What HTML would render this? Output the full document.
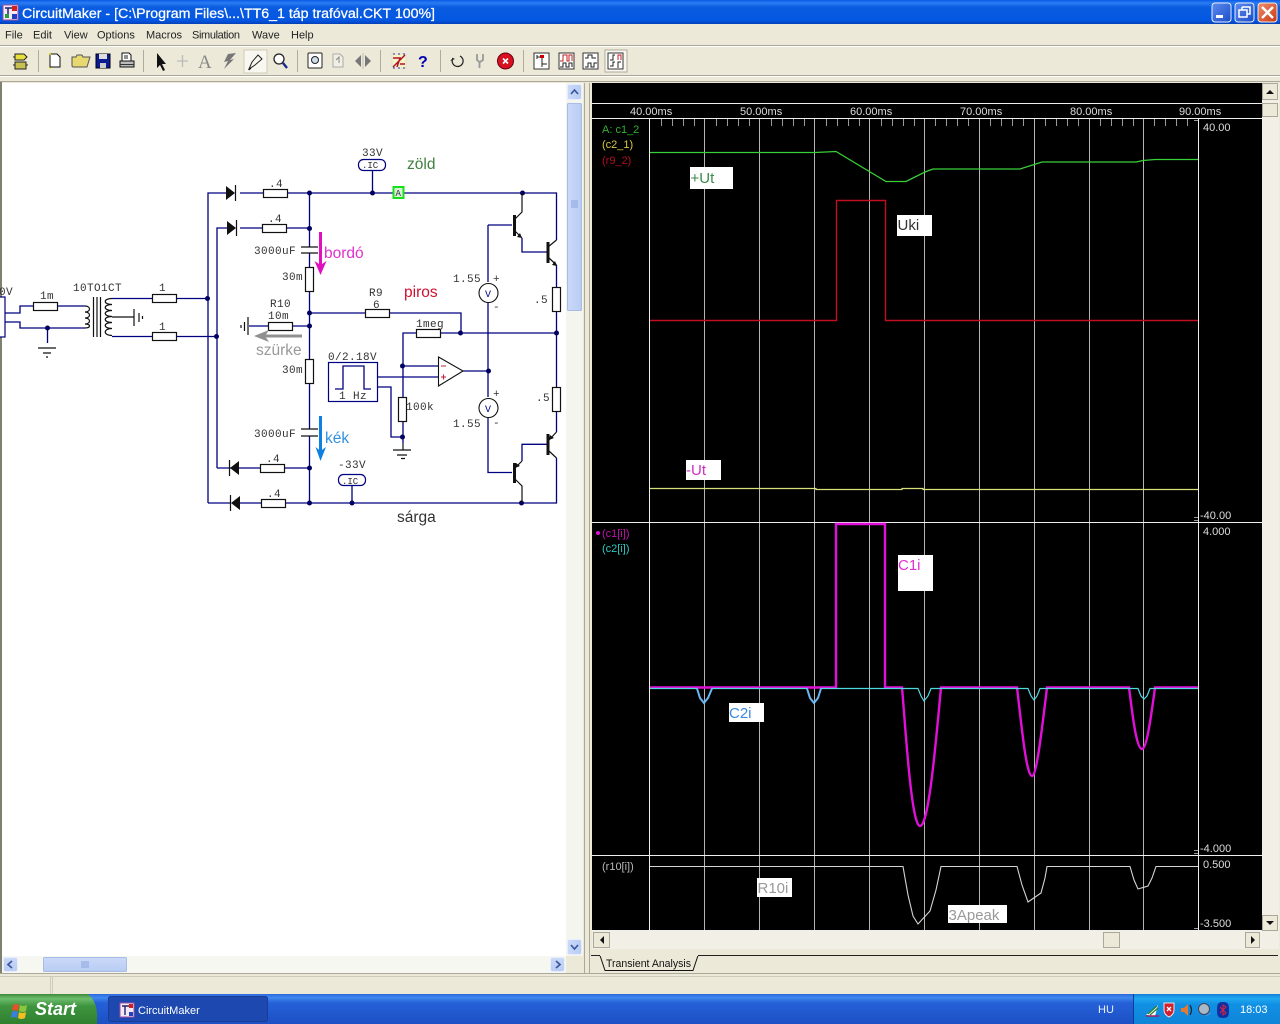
<!DOCTYPE html>
<html><head><meta charset="utf-8"><title>CircuitMaker</title>
<style>
html,body{margin:0;padding:0;background:#ece9d8;overflow:hidden}
svg{display:block;position:absolute;left:0;top:0}
text{font-family:"Liberation Sans",sans-serif;white-space:pre}
.m{font-family:"Liberation Mono",monospace;font-size:11px;fill:#333;letter-spacing:.4px}
.menu{font-size:11px;fill:#222}
.ax{font-size:11px;fill:#ddd}
.w{fill:none;stroke:#000080;stroke-width:1.3}
.k{fill:none;stroke:#111;stroke-width:1.2}
.r{fill:#fff;stroke:#111;stroke-width:1.2}
.d{fill:#000060}
.g{stroke:#b4b4b4;stroke-width:1;fill:none}
.lab{font-size:15px}
</style></head><body>
<svg width="1280" height="1024" viewBox="0 0 1280 1024" xmlns="http://www.w3.org/2000/svg">
<defs>
<linearGradient id="tb" x1="0" y1="0" x2="0" y2="1"><stop offset="0" stop-color="#0a5ae6"/><stop offset=".12" stop-color="#2a7cf4"/><stop offset=".3" stop-color="#0a5ce0"/><stop offset=".85" stop-color="#0457e2"/><stop offset="1" stop-color="#0340b8"/></linearGradient>
<linearGradient id="task" x1="0" y1="0" x2="0" y2="1"><stop offset="0" stop-color="#2a68dc"/><stop offset=".12" stop-color="#3f88ee"/><stop offset=".3" stop-color="#2560d8"/><stop offset="1" stop-color="#1d50c4"/></linearGradient>
<linearGradient id="tray" x1="0" y1="0" x2="0" y2="1"><stop offset="0" stop-color="#1080d8"/><stop offset=".15" stop-color="#20a8f0"/><stop offset=".35" stop-color="#1090e4"/><stop offset="1" stop-color="#0f84d8"/></linearGradient>
<linearGradient id="start" x1="0" y1="0" x2="0" y2="1"><stop offset="0" stop-color="#3a8a3a"/><stop offset=".15" stop-color="#6cbc6c"/><stop offset=".4" stop-color="#3f953f"/><stop offset="1" stop-color="#2f7f2f"/></linearGradient>
<linearGradient id="btn" x1="0" y1="0" x2="1" y2="1"><stop offset="0" stop-color="#5e8cf0"/><stop offset="1" stop-color="#1c4cc8"/></linearGradient>
<linearGradient id="cl" x1="0" y1="0" x2="1" y2="1"><stop offset="0" stop-color="#ec9070"/><stop offset="1" stop-color="#cc3810"/></linearGradient>
<linearGradient id="sb" x1="0" y1="0" x2="1" y2="0"><stop offset="0" stop-color="#ccd9f9"/><stop offset="1" stop-color="#b8ccf3"/></linearGradient>
<linearGradient id="sbh" x1="0" y1="0" x2="0" y2="1"><stop offset="0" stop-color="#ccd9f9"/><stop offset="1" stop-color="#b8ccf3"/></linearGradient>
</defs>

<!-- window chrome -->
<rect width="1280" height="1024" fill="#ece9d8"/>
<rect width="1280" height="24" fill="url(#tb)"/>
<rect x="3" y="5" width="15" height="15" fill="#f4e8f4" stroke="#a050a0"/>
<path d="M5 8h9M8 8v9" stroke="#226" stroke-width="1.5"/><rect x="12" y="6" width="5" height="5" fill="#d02020"/><rect x="12" y="14" width="5" height="5" fill="#2040c0"/><rect x="5" y="14" width="4" height="4" fill="#20a040"/>
<text x="22" y="18" font-size="13.5" fill="#fff" stroke="#fff" stroke-width=".25" textLength="413" lengthAdjust="spacingAndGlyphs">CircuitMaker - [C:\Program Files\...\TT6_1 táp trafóval.CKT 100%]</text>
<g>
<rect x="1212" y="3" width="19" height="19" rx="3" fill="url(#btn)" stroke="#e8eefc"/><rect x="1216" y="15" width="7" height="3" fill="#fff"/>
<rect x="1235" y="3" width="19" height="19" rx="3" fill="url(#btn)" stroke="#e8eefc"/><path d="M1242 7h8v7h-3M1242 7v3" fill="none" stroke="#fff" stroke-width="1.5"/><rect x="1239" y="10" width="8" height="7" fill="none" stroke="#fff" stroke-width="1.5"/>
<rect x="1258" y="3" width="19" height="19" rx="3" fill="url(#cl)" stroke="#f4e8e0"/><path d="M1262 7l11 11M1273 7l-11 11" stroke="#fff" stroke-width="2.4"/>
</g>

<!-- menu -->
<text class="menu" x="5" y="38.5">File</text><text class="menu" x="33" y="38.5">Edit</text><text class="menu" x="64" y="38.5">View</text><text class="menu" x="97" y="38.5">Options</text><text class="menu" x="146" y="38.5">Macros</text><text class="menu" x="192" y="38.5" textLength="48">Simulation</text><text class="menu" x="252" y="38.5">Wave</text><text class="menu" x="291" y="38.5">Help</text>
<path d="M0 45.5h1280" stroke="#aca899"/><path d="M0 46.5h1280" stroke="#fff"/>
<path d="M0 75.5h1280" stroke="#aca899"/><path d="M0 76.5h1280" stroke="#fff"/>

<!-- toolbar -->
<g>
<path d="M38.5 50v22M143.5 50v22M297.5 50v22M380.5 50v22M440.5 50v22M523.5 50v22" stroke="#b0ac9c"/>
<path d="M15 54h9l3 3-3 3h-9z" fill="#e8e040" stroke="#222"/><rect x="15" y="62" width="11" height="7" fill="#c8c050" stroke="#222"/><path d="M13 57h2M13 65h2M26 65h2" stroke="#222"/>
<path d="M50 54h7l3 3v10h-10z" fill="#fff" stroke="#111"/><path d="M49 53l2 2M49 68h2" stroke="#ee0"/>
<path d="M72 66v-9h4l1-2h5l1 2h7l-3 10H73z" fill="#e8d870" stroke="#555"/>
<rect x="96" y="54" width="14" height="14" fill="#0a1a90" stroke="#001"/><rect x="99" y="54" width="8" height="5" fill="#ddd"/><rect x="100" y="63" width="6" height="5" fill="#ccc"/>
<path d="M122 53h7l2 2v6h-9z" fill="#fff" stroke="#111"/><rect x="120" y="61" width="14" height="6" fill="#bbb" stroke="#111"/><path d="M124 56h4M124 58h4" stroke="#222"/><path d="M120 64.500h14" stroke="#333"/>
<path d="M157 53l0 15 3-3 3 6 2-1-3-6 4 0z" fill="#111"/>
<path d="M177 61h11M182.500 55v12" stroke="#bbb" stroke-width="1.3"/>
<text x="198" y="68" font-size="19" fill="#888" style="font-family:'Liberation Serif',serif">A</text>
<path d="M236 53l-8 1-4 8 4-1-4 8 10-10-4 1z" fill="#777"/>
<rect x="244" y="50" width="23" height="23" fill="#f8f7f0" stroke="#d0ccb8"/>
<path d="M249 69l3-7 6-7 4 4-7 6z" fill="none" stroke="#222"/><path d="M249 70l2-2" stroke="#111"/>
<circle cx="279" cy="59" r="5" fill="#fff" stroke="#222" stroke-width="1.3"/><path d="M283 63l4 5" stroke="#1a2a90" stroke-width="2.4"/>
<rect x="308" y="53" width="14" height="15" rx="1" fill="#fff" stroke="#222"/><circle cx="315" cy="60" r="3.500" fill="#cde" stroke="#222"/>
<path d="M333 54h7l3 3v10h-10z" fill="#f2f0e6" stroke="#aaa"/><path d="M336 60l3-3v6" fill="none" stroke="#888"/>
<path d="M361 55l-6 6 6 6zM365 55l6 6-6 6z" fill="#777"/><path d="M363 53v16" stroke="#bbb"/>
<rect x="392" y="54" width="14" height="14" fill="#f6f4c0" stroke="#ddd"/><path d="M393 67l12-12M393 58h7l-3 9M405 64h-5" stroke="#b01030" stroke-width="1.5" fill="none"/><path d="M393 54h12M393 68h12" stroke="#3030a0" stroke-dasharray="2 3"/>
<text x="418" y="67" font-size="16" font-weight="bold" fill="#0000b0">?</text>
<path d="M460 56a5.500 5.500 0 1 1-7 2" fill="none" stroke="#222" stroke-width="1.2"/><path d="M450 61l5-2-2-1z" fill="#222"/>
<path d="M477 54v6l2.500 2v6M483 54v6l-3 2" fill="none" stroke="#999" stroke-width="1.8"/>
<circle cx="505.500" cy="61" r="8" fill="#d81020" stroke="#601"/><path d="M503 58.500l5 5M508 58.500l-5 5" stroke="#fff" stroke-width="1.6"/>
<rect x="534" y="53" width="15" height="16" fill="#fff" stroke="#333"/><path d="M537 57h5v7h5M542 64v3M537 55v4" fill="none" stroke="#222"/><rect x="540" y="55" width="4" height="3" fill="#c00"/>
<rect x="559" y="53" width="15" height="16" fill="#fff" stroke="#333"/><path d="M560 61h3v-6h4v6h2v-6h3v6" fill="none" stroke="#c02020"/><path d="M560 67h3v-4h3v4h3v-4h3v4" fill="none" stroke="#222"/>
<rect x="583" y="53" width="15" height="16" fill="#fff" stroke="#333"/><path d="M585 58h3v-3h4v3h4M585 67h3v-4h3v4h3v-4h3" fill="none" stroke="#222"/>
<rect x="605" y="50" width="22" height="22" fill="#f8f7f0" stroke="#b0ac9c"/><rect x="608" y="53" width="15" height="16" fill="#fff" stroke="#333"/><path d="M610 60h3v-5h2M610 66h3v-4h2M618 60v-5h3v5M618 68v-6h3" fill="none" stroke="#222"/><path d="M618 60v-5h3v5" fill="none" stroke="#c02020"/>
</g>
<path d="M0 81.500h1280" stroke="#aca899"/>

<!-- left panel -->
<rect x="0" y="82" width="2" height="892" fill="#808070"/>
<rect x="2" y="83" width="564" height="873" fill="#fff"/>
<rect x="566" y="83" width="17" height="873" fill="#f5f5ef"/>
<rect x="2" y="956" width="564" height="17" fill="#f7f7f2"/>
<rect x="567.500" y="84.500" width="14" height="15" rx="2" fill="url(#sb)" stroke="#e8eefc"/><path d="M571 94l3.500-4 3.500 4" fill="none" stroke="#3a58a0" stroke-width="1.7"/>
<rect x="567.500" y="103.500" width="14" height="207" rx="1" fill="url(#sb)" stroke="#a8bce6"/><path d="M571 201h7M571 203h7M571 205h7M571 207h7" stroke="#8aa4dc"/>
<rect x="567.500" y="939.500" width="14" height="15" rx="2" fill="url(#sb)" stroke="#e8eefc"/><path d="M571 945l3.500 4 3.500-4" fill="none" stroke="#3a58a0" stroke-width="1.7"/>
<rect x="3.500" y="957.500" width="14" height="14" rx="2" fill="url(#sbh)" stroke="#e8eefc"/><path d="M12 961l-4 3.500 4 3.500" fill="none" stroke="#3a58a0" stroke-width="1.7"/>
<rect x="43.500" y="957.500" width="83" height="14" rx="1" fill="url(#sbh)" stroke="#a8bce6"/><path d="M82 961v7M84 961v7M86 961v7M88 961v7" stroke="#8aa4dc"/>
<rect x="550.500" y="957.500" width="14" height="14" rx="2" fill="url(#sbh)" stroke="#e8eefc"/><path d="M556 961l4 3.500-4 3.500" fill="none" stroke="#3a58a0" stroke-width="1.700"/>
<path d="M584.500 83v890" stroke="#aca899"/><path d="M589.500 83v890" stroke="#aca899"/>

<!-- schematic wires -->
<path class="w" d="M208 503V193H226M240 193H263M287 193H556.500V240M556.500 265V287M217 468V228H227M240 228H262M286 228H310M309.500 193V247M309.500 253V267M309.500 291V359M309.500 383V429M309.500 436V503M240 468H217M239 468H260M285 468H310M231 503H208M240 503H261M286 503H556.500V458"/>
<path class="w" d="M5 313H20V306H33M58 306H85M5 322H20V328H85M47.500 328V343M112 298.500H152M177 298.500H208M112 336.500H152M177 336.500H217M372.500 170V193M352 485V503M293 326H310M249 326H268M310 313H365M390 313H461V333M403 397V333H416M441 333H557M556.500 311V387M556.500 412V432M403 421V443M403 366H438M378 377H438M378 387H391V437H403M463 371H488M488 225V282M488 303V397M488 418V472.500H512M488 225H512M522 238V252H547M522 461V444.300H547"/>
<path class="k" d="M38 348H56M43 353H51M46 357H48M403 443V450M393 450H411M397 455H407M401 458.500H405M112 317H134M241 325V328M244.500 322V331M248 317V335M134 309V326M139 313V322M142.500 316V319"/>
<g class="d"><circle cx="207.500" cy="298.500" r="2.500"/><circle cx="216.500" cy="336.500" r="2.500"/><circle cx="47.500" cy="328" r="2.500"/><circle cx="309.500" cy="193" r="2.500"/><circle cx="372.500" cy="193" r="2.500"/><circle cx="522.500" cy="193" r="2.500"/><circle cx="309.500" cy="228.500" r="2.500"/><circle cx="309.500" cy="313" r="2.500"/><circle cx="309.500" cy="326" r="2.500"/><circle cx="309.500" cy="468" r="2.500"/><circle cx="309.500" cy="503" r="2.500"/><circle cx="352" cy="503" r="2.500"/><circle cx="521.500" cy="503" r="2.500"/><circle cx="460.500" cy="333" r="2.500"/><circle cx="556.500" cy="333" r="2.500"/><circle cx="402.500" cy="366" r="2.500"/><circle cx="402.500" cy="437" r="2.500"/><circle cx="488.500" cy="371" r="2.500"/></g>
<!-- source + transformer -->
<rect x="-4" y="297" width="9" height="40" fill="#fff" stroke="#000080" stroke-width="1.200"/>
<path class="k" d="M85 306c6 0 6 6 0 6c6 0 6 6 0 6c6 0 6 6 0 6c6 0 6 4 0 4M112 298.500c-9 0-9 6 0 6c-9 0-9 6 0 6c-9 0-9 6 0 6c-9 0-9 6 0 6c-9 0-9 6 0 6c-9 0-9 7 0 7M93.500 297V337M97 297V337M100.500 297V337"/>
<!-- resistors -->
<g class="r"><rect x="33.500" y="302.500" width="24" height="8"/><rect x="152.500" y="294.500" width="24" height="8"/><rect x="152.500" y="332.500" width="24" height="8"/><rect x="263.500" y="189.500" width="24" height="8"/><rect x="262.500" y="224.500" width="24" height="8"/><rect x="260.500" y="464.500" width="24" height="8"/><rect x="261.500" y="499.500" width="24" height="8"/><rect x="268.500" y="322.500" width="24" height="8"/><rect x="365.500" y="309.500" width="24" height="8"/><rect x="416.500" y="329.500" width="24" height="8"/><rect x="305.500" y="267.500" width="8" height="24"/><rect x="305.500" y="359.500" width="8" height="24"/><rect x="398.500" y="397.500" width="8" height="24"/><rect x="552.500" y="287.500" width="8" height="24"/><rect x="552.500" y="387.500" width="8" height="24"/></g>
<!-- diodes -->
<path d="M226 186l9 7-9 7z M227 221l9 7-9 7z M239 461l-9 7 9 7z M240 496l-9 7 9 7z" fill="#111"/>
<path d="M235.500 185v16M236.500 220v16M229.500 460v16M230.500 495v16" stroke="#111" stroke-width="1.200"/>
<!-- caps -->
<path d="M301 247H318M301 253H318M301 429H318M301 436H318" stroke="#111" stroke-width="1.300"/>
<!-- ICs -->
<rect x="358.500" y="159.500" width="27" height="11" rx="5" fill="#fff" stroke="#000080" stroke-width="1.200"/>
<rect x="338.500" y="474.500" width="27" height="11" rx="5" fill="#fff" stroke="#000080" stroke-width="1.200"/>
<rect x="393.500" y="187" width="10" height="11" fill="#d8f0d8" stroke="#18e018" stroke-width="2"/>
<text class="m" x="395.500" y="196" style="font-size:9px;letter-spacing:0">A</text>
<!-- op amp -->
<path d="M438.500 357L463 371L438.500 386z" fill="#fff" stroke="#111" stroke-width="1.100"/>
<path d="M441 366h5M441 377h5M443.500 374.500v5" stroke="#c02040" stroke-width="1.100"/>
<!-- pulse -->
<rect x="328.500" y="362.500" width="49" height="39" fill="#fff" stroke="#000080" stroke-width="1.200"/>
<path d="M335 389H343V366H364V389H371" class="w"/>
<!-- meters -->
<circle cx="488.500" cy="293" r="9.500" fill="#fff" stroke="#111" stroke-width="1.100"/><circle cx="488.500" cy="408" r="9.500" fill="#fff" stroke="#111" stroke-width="1.100"/>
<!-- transistors -->
<path d="M514.500 215V236M548 242V263M548 434V455M514.500 463V483" stroke="#111" stroke-width="3"/>
<path class="k" d="M515 219L522 212V193M515 231L522 238M548 247L556.500 240M549 258L556.500 265M549 440L556.500 432M549 451L556.500 458M515 468L522 461M515 479L522 486V503"/>
<path d="M522 238l-5-1 3-4zM557 266l-5-1 3-4zM549 440l1-5 4 3zM515 468l1-5 4 3z" fill="#111"/>
<!-- schematic labels -->
<text class="m" x="-1" y="295">0V</text>
<text class="m" x="40" y="299">1m</text><text class="m" x="73" y="291">10TO1CT</text><text class="m" x="159" y="291">1</text><text class="m" x="159" y="330">1</text>
<text class="m" x="269" y="187">.4</text><text class="m" x="268" y="222">.4</text><text class="m" x="266" y="462">.4</text><text class="m" x="267" y="497">.4</text>
<text class="m" x="254" y="254">3000uF</text><text class="m" x="254" y="437">3000uF</text><text class="m" x="282" y="280">30m</text><text class="m" x="282" y="373">30m</text>
<text class="m" x="270" y="307">R10</text><text class="m" x="268" y="319">10m</text><text class="m" x="369" y="296">R9</text><text class="m" x="373" y="308">6</text><text class="m" x="416" y="327">1meg</text>
<text class="m" x="328" y="360">0/2.18V</text><text class="m" x="339" y="399">1 Hz</text><text class="m" x="406" y="410">100k</text>
<text class="m" x="453" y="282">1.55</text><text class="m" x="453" y="427">1.55</text><text class="m" x="534" y="303">.5</text><text class="m" x="536" y="401">.5</text>
<text class="m" x="362" y="156">33V</text><text class="m" x="338" y="468">-33V</text>
<text class="m" x="362" y="168" style="font-size:9px;letter-spacing:0">.IC</text><text class="m" x="342" y="484" style="font-size:9px;letter-spacing:0">.IC</text>
<text class="m" x="485" y="297" style="font-size:10px;letter-spacing:0;fill:#000080">V</text><text class="m" x="485" y="412" style="font-size:10px;letter-spacing:0;fill:#000080">V</text>
<text class="m" x="493" y="282">+</text><text class="m" x="493" y="310">-</text><text class="m" x="493" y="397">+</text><text class="m" x="493" y="426">-</text>
<!-- colour annotations -->
<text x="407" y="169" font-size="15.5" fill="#3f8040">zöld</text>
<text x="324" y="258" font-size="15.5" fill="#e030d0">bordó</text>
<text x="404" y="297" font-size="15.5" fill="#d01030">piros</text>
<text x="256" y="355" font-size="15.5" fill="#999">szürke</text>
<text x="325" y="443" font-size="15.5" fill="#3090e0">kék</text>
<text x="397" y="522" font-size="15.5" fill="#333">sárga</text>
<path d="M320.500 232V268" stroke="#e010c0" stroke-width="3"/><path d="M314.500 261L320.500 275L326.500 261L320.500 265z" fill="#e010c0"/>
<path d="M320.500 416V454" stroke="#1080e0" stroke-width="3"/><path d="M315.500 447L320.500 461L326 447L320.500 451z" fill="#1080e0"/>
<path d="M302 336H262" stroke="#909090" stroke-width="3"/><path d="M269 330L254 336L269 342L265 336z" fill="#909090"/>

<!-- right panel -->
<rect x="592" y="83" width="670" height="848" fill="#000"/>
<rect x="1262" y="83" width="17" height="848" fill="#f1efe6"/>
<rect x="592" y="931" width="687" height="18" fill="#f1efe6"/>
<g>
<path class="g" d="M704.500 118V930M759.500 118V930M814.500 118V930M869.500 118V930M924.500 118V930M979.500 118V930M1034.500 118V930M1089.500 118V930M1143.500 118V930"/>
<path d="M649.500 118V930M1198.500 118V930" stroke="#eee" stroke-width="1"/>
<path d="M592 103.500H1262M592 118.500H1262M592 522.500H1262M592 855.500H1262M592 930.500H1262" stroke="#eee" stroke-width="1"/>
<path stroke="#999" stroke-width="1" d="M661.500 119v7M672.500 119v7M683.500 119v7M694.500 119v7M716.500 119v7M727.500 119v7M738.500 119v7M749.500 119v7M771.500 119v7M782.500 119v7M793.500 119v7M804.500 119v7M826.500 119v7M837.500 119v7M848.500 119v7M859.500 119v7M881.500 119v7M892.500 119v7M903.500 119v7M914.500 119v7M935.500 119v7M946.500 119v7M957.500 119v7M968.500 119v7M990.500 119v7M1001.500 119v7M1012.500 119v7M1023.500 119v7M1045.500 119v7M1056.500 119v7M1067.500 119v7M1078.500 119v7M1100.500 119v7M1111.500 119v7M1122.500 119v7M1133.500 119v7M1154.500 119v7M1165.500 119v7M1176.500 119v7M1187.500 119v7"/>
<path stroke="#999" d="M1194 120.500h4M1194 517.500h4M1194 520.500h4M1194 850.500h4M1194 853.500h4M1194 928.500h4"/>
</g>
<!-- traces -->
<path d="M650 152.500H815L836 151.500L886 181.500H906L925 172L933 169H1020L1042 162H1136L1143 160.500L1155 159.500H1198" fill="none" stroke="#38d038" stroke-width="1.300"/>
<path d="M650 320.500H836.500V200.500H885.500V320.500H1198" fill="none" stroke="#c01020" stroke-width="1.400"/>
<path d="M650 488.500H816V489.500H902V488.500H923V489.500H1198" fill="none" stroke="#d8e078" stroke-width="1.200"/>
<path d="M650 687.500H836V524H885V687.500H902C905 720 911 826 920 826C929 826 936 740 941 687.500H1017C1021 720 1026 776 1032 776C1037 776 1043 720 1047 687.500H1129C1132 710 1136 749 1142 749C1147 749 1152 710 1155 687.500H1198" fill="none" stroke="#e010d8" stroke-width="2.400"/>
<path d="M650 688.500H697L700 698L704 703L708 698L712 688.500H807L810 698L814 703L818 698L821 688.500H918L921 696L924 701L928 696L931 688.500H1028L1031 696L1034 700L1037 696L1040 688.500H1138L1141 696L1144 699L1147 696L1150 688.500H1198" fill="none" stroke="#50d8e0" stroke-width="1.200"/>
<path d="M697 688.500L700 698L704 703L708 698L712 688.500M807 688.500L810 698L814 703L818 698L821 688.500" fill="none" stroke="#68b8f4" stroke-width="2"/>
<path d="M650 866.500H903L908 895L913 916L918 924L930 911L936 890L941 866.500H1017L1022 885L1028 902L1041 893L1045 878L1047 866.500H1130L1134 880L1138 889L1148 886L1152 878L1156 866.500H1198" fill="none" stroke="#d4d4d4" stroke-width="1.100"/>
<!-- axis labels -->
<g class="ax"><text x="630" y="115">40.00ms</text><text x="740" y="115">50.00ms</text><text x="850" y="115">60.00ms</text><text x="960" y="115">70.00ms</text><text x="1070" y="115">80.00ms</text><text x="1179" y="115">90.00ms</text>
<text x="1203" y="131">40.00</text><text x="1200" y="519">-40.00</text><text x="1203" y="535">4.000</text><text x="1200" y="852">-4.000</text><text x="1203" y="868">0.500</text><text x="1200" y="927">-3.500</text></g>
<text x="602" y="133" font-size="11" fill="#30b030">A: c1_2</text><text x="602" y="148" font-size="11" fill="#d8c840">(c2_1)</text><text x="602" y="164" font-size="11" fill="#b01020">(r9_2)</text>
<circle cx="598" cy="533" r="2" fill="#e010d0"/><text x="602" y="537" font-size="11" fill="#c010b0">(c1[i])</text><text x="602" y="552" font-size="11" fill="#30c8c0">(c2[i])</text><text x="602" y="870" font-size="11" fill="#b8b8b8">(r10[i])</text>
<!-- white labels -->
<rect x="690" y="167" width="43" height="22" fill="#fff"/><text class="lab" x="690.500" y="183" fill="#3a8a4a">+Ut</text>
<rect x="897" y="215" width="35" height="21" fill="#fff"/><text class="lab" x="897.500" y="230" fill="#333">Uki</text>
<rect x="686" y="460" width="35" height="20" fill="#fff"/><text class="lab" x="686" y="475" fill="#d030c0">-Ut</text>
<rect x="898" y="555" width="35" height="36" fill="#fff"/><text class="lab" x="898" y="570" fill="#e030d0">C1i</text>
<rect x="729" y="703" width="35" height="19" fill="#fff"/><text class="lab" x="729" y="718" fill="#3a88e0">C2i</text>
<rect x="757" y="878" width="35" height="19" fill="#fff"/><text class="lab" x="757.500" y="893" fill="#999">R10i</text>
<rect x="948" y="905" width="59" height="18" fill="#fff"/><text class="lab" x="948.500" y="920" fill="#999">3Apeak</text>
<!-- right scroll buttons -->
<g fill="#ece9d8" stroke="#aca899">
<rect x="1262.500" y="83.500" width="15" height="16"/><rect x="1262.500" y="103.500" width="15" height="13"/><rect x="1262.500" y="915.500" width="15" height="15"/>
<rect x="593.500" y="932.500" width="16" height="15"/><rect x="1103.500" y="932.500" width="16" height="15"/><rect x="1245.500" y="932.500" width="14" height="15"/>
</g>
<path d="M1266 94l4-4 4 4zM1266 921l4 4 4-4zM604 936l-4 4 4 4zM1251 936l4 4-4 4z" fill="#111"/>
<!-- tab strip -->
<rect x="592" y="956" width="687" height="17" fill="#ece9d8"/>
<path d="M591 955.500H1278" stroke="#222" stroke-width="1"/>
<path d="M600 955.500L605 970.500H693L698 955.500" fill="#ece9d8" stroke="#111" stroke-width="1"/>
<rect x="600" y="954" width="98" height="2" fill="#ece9d8"/>
<text x="606" y="967" font-size="11" fill="#111" textLength="85" lengthAdjust="spacingAndGlyphs">Transient Analysis</text>
<path d="M0 973.500H1280" stroke="#aca899"/>
<path d="M0 976.500H1280" stroke="#cfccba"/>
<path d="M50.500 977V994" stroke="#cfccba"/><path d="M52.500 977V994" stroke="#cfccba"/>

<!-- taskbar -->
<rect x="0" y="994" width="1280" height="30" fill="url(#task)"/>
<path d="M0 994H88C95 1000 98 1008 97 1024H0z" fill="url(#start)"/>
<g transform="translate(12,1002)"><path d="M1 3q4-2 6 0l-1 6q-3-2-6 0z" fill="#e8502a"/><path d="M8 3q3 2 7 0l-1 6q-3 2-7 0z" fill="#8cc63e"/><path d="M0 10q3-2 6 0l-1 6q-3-2-6 0z" fill="#3a7ee0"/><path d="M7 10q3 2 7 0l-1 6q-4 2-7 0z" fill="#f4c020"/></g>
<text x="35" y="1015" font-size="18" font-weight="bold" font-style="italic" fill="#fff">Start</text>
<rect x="108.500" y="996.500" width="159" height="25" rx="2" fill="#1c48b0" stroke="#1a3c94"/>
<rect x="120" y="1003" width="14" height="14" fill="#f4e8f4" stroke="#a050a0"/><path d="M122 1006h9M125 1006v9" stroke="#226" stroke-width="1.400"/><rect x="129" y="1004" width="4" height="4" fill="#d02020"/><rect x="129" y="1012" width="4" height="4" fill="#2040c0"/>
<text x="138" y="1014" font-size="11" fill="#fff">CircuitMaker</text>
<text x="1098" y="1013" font-size="11" fill="#e8f0ff">HU</text>
<path d="M1133.500 994V1024" stroke="#0c3c9c"/><path d="M1134 994H1280V1024H1134z" fill="url(#tray)"/>
<g>
<path d="M1146 1015l12-10-3 11z" fill="#fff"/><path d="M1148 1014l9-8M1150 1015l8-7" stroke="#2a8030" stroke-width="1.300"/><path d="M1146 1016h13" stroke="#a02060" stroke-width="1.500"/>
<path d="M1164 1003h10v7c0 4-3 6-5 7c-2-1-5-3-5-7z" fill="#d02030" stroke="#f0e0e0"/><path d="M1167 1007l4 4M1171 1007l-4 4" stroke="#fff" stroke-width="1.300"/>
<path d="M1181 1008h3l4-4v12l-4-4h-3z" fill="#e87830"/><path d="M1190 1005q3 5 0 10" fill="none" stroke="#222" stroke-width="1.200"/>
<circle cx="1204" cy="1009" r="5.500" fill="#a8b8c8" stroke="#445"/><path d="M1206 1016l5-3" stroke="#6090e0"/>
<path d="M1223 1002c5 0 6 2 6 8s-1 8-6 8s-6-2-6-8s1-8 6-8z" fill="#1030a0"/><path d="M1220 1007l6 6-3 2v-10l3 2-6 6" fill="none" stroke="#e02040"/>
</g>
<text x="1240" y="1013" font-size="11" fill="#fff">18:03</text>
</svg>
</body></html>
